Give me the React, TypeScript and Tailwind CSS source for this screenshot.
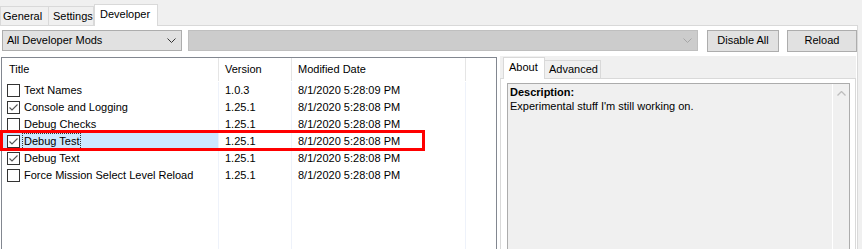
import React from 'react';

type Mod = {
  title: string;
  version: string;
  date: string;
  checked: boolean;
  selected?: boolean;
};

const mods: Mod[] = [
  { title: 'Text Names', version: '1.0.3', date: '8/1/2020 5:28:09 PM', checked: false },
  { title: 'Console and Logging', version: '1.25.1', date: '8/1/2020 5:28:08 PM', checked: true },
  { title: 'Debug Checks', version: '1.25.1', date: '8/1/2020 5:28:08 PM', checked: false },
  { title: 'Debug Test', version: '1.25.1', date: '8/1/2020 5:28:08 PM', checked: true, selected: true },
  { title: 'Debug Text', version: '1.25.1', date: '8/1/2020 5:28:08 PM', checked: true },
  { title: 'Force Mission Select Level Reload', version: '1.25.1', date: '8/1/2020 5:28:08 PM', checked: false },
];

function Chevron({ color }: { color: string }) {
  return (
    <svg width="9" height="5" viewBox="0 0 9 5" className="shrink-0">
      <polyline points="0.5,0.5 4.5,4.5 8.5,0.5" fill="none" stroke={color} strokeWidth="1" />
    </svg>
  );
}

function CheckBox({ checked }: { checked: boolean }) {
  return (
    <span className="w-[13px] h-[13px] border border-[#333333] bg-white flex items-center justify-center shrink-0">
      {checked && (
        <svg width="11" height="11" viewBox="0 0 11 11">
          <polyline points="1.5,5.5 4,8 9.5,2.5" fill="none" stroke="#555555" strokeWidth="1.1" />
        </svg>
      )}
    </span>
  );
}

export default function App() {
  return (
    <div className="w-[862px] h-[249px] bg-[#f0f0f0] flex flex-col overflow-hidden relative font-['Liberation_Sans',Arial,sans-serif] text-[11px] text-black leading-none">
      {/* Top tabs */}
      <div className="h-[25px] flex items-end shrink-0">
        <div className="h-[19px] w-[49px] border border-[#d9d9d9] border-b-0 bg-[#f0f0f0] flex items-center pl-[2px]">General</div>
        <div className="h-[19px] w-[45px] border border-[#d9d9d9] border-b-0 border-l-0 bg-[#f0f0f0] flex items-center pl-[4px]">Settings</div>
        <div className="h-[22px] w-[64px] border border-[#d9d9d9] border-b-0 bg-white flex items-center pl-[5px] pb-[3px] -mb-px z-10">Developer</div>
      </div>

      {/* Tab page */}
      <div className="flex-1 w-[858px] bg-white border-t border-r border-[#d9d9d9] flex flex-col">
        {/* Toolbar */}
        <div className="flex items-center h-[21px] mt-[4px] shrink-0">
          <div className="ml-[2px] w-[180px] h-[21px] bg-[#e1e1e1] border border-[#adadad] flex items-center justify-between pl-[4px] pr-[5px]">
            <span>All Developer Mods</span>
            <Chevron color="#333333" />
          </div>
          <div className="ml-[6px] w-[510px] h-[21px] bg-[#cccccc] border border-[#bfbfbf] flex items-center justify-end pr-[5px]">
            <Chevron color="#a6a6a6" />
          </div>
          <button className="ml-[9px] w-[72px] h-[22px] bg-[#e1e1e1] border border-[#adadad] flex items-center justify-center">
            Disable All
          </button>
          <button className="ml-[8px] w-[70px] h-[22px] bg-[#e1e1e1] border border-[#adadad] flex items-center justify-center">
            Reload
          </button>
        </div>

        {/* Main area */}
        <div className="flex-1 flex mt-[5px] min-h-0">
          {/* List view */}
          <div className="ml-px mt-px w-[496px] border border-[#828790] border-b-0 bg-white flex flex-col">
            <div className="h-[23px] flex shrink-0">
              <div className="w-[217px] border-r border-[#e5e5e5] pl-[7px] flex items-center">Title</div>
              <div className="w-[73px] border-r border-[#e5e5e5] pl-[6px] flex items-center">Version</div>
              <div className="w-[174px] border-r border-[#e5e5e5] pl-[6px] flex items-center">Modified Date</div>
              <div className="flex-1" />
            </div>
            <div className="flex-1 flex flex-col pt-px">
              {mods.map((m) => (
                <div key={m.title} className="h-[17px] flex shrink-0">
                  <div className={`w-[217px] border-r border-[#eef2fa] flex items-center pl-[5px] gap-[4px] ${m.selected ? 'bg-[#cce8ff]' : ''}`}>
                    <CheckBox checked={m.checked} />
                    <span className={m.selected ? 'outline outline-1 outline-dotted outline-[#333333] px-[1px] py-[2px] -ml-[1px]' : ''}>
                      {m.title}
                    </span>
                  </div>
                  <div className="w-[73px] border-r border-[#eef2fa] flex items-center pl-[6px]">{m.version}</div>
                  <div className="w-[174px] border-r border-[#eef2fa] flex items-center pl-[6px]">{m.date}</div>
                  <div className="flex-1" />
                </div>
              ))}
              <div className="flex-1 flex">
                <div className="w-[217px] border-r border-[#eef2fa]" />
                <div className="w-[73px] border-r border-[#eef2fa]" />
                <div className="w-[174px] border-r border-[#eef2fa]" />
                <div className="flex-1" />
              </div>
            </div>
          </div>

          {/* Right panel */}
          <div className="ml-[3px] w-[356px] flex flex-col bg-[#f0f0f0]">
            <div className="h-[22px] flex items-end shrink-0">
              <div className="ml-[3px] h-[22px] w-[42px] bg-white border border-[#d9d9d9] border-b-0 flex items-center pl-[5px] pb-[3px] -mb-px z-10">About</div>
              <div className="h-[18px] w-[56px] bg-[#f0f0f0] border border-[#d9d9d9] border-b-0 border-l-0 flex items-center pl-[4px]">Advanced</div>
            </div>
            <div className="flex-1 bg-white border border-[#d9d9d9] border-b-0 pt-[4px] pl-[6px] pr-[5px] flex flex-col">
              <div className="flex-1 bg-[#f0f0f0] border border-[#acacac] border-b-0 flex">
                <div className="flex-1 pl-[2px] pt-[3px] flex flex-col gap-[3px]">
                  <span className="font-bold">Description:</span>
                  <span>Experimental stuff I'm still working on.</span>
                </div>
                <div className="w-[17px] border-l border-white flex justify-center pt-[7px]">
                  <svg width="9" height="5" viewBox="0 0 9 5">
                    <polyline points="0.5,4.5 4.5,0.5 8.5,4.5" fill="none" stroke="#bdbdbd" strokeWidth="1.3" />
                  </svg>
                </div>
              </div>
            </div>
          </div>
        </div>
      </div>

      {/* Annotation highlight */}
      <div className="absolute left-0 top-[130px] w-[425px] h-[21px] border-[3px] border-[#ff0000]" />
    </div>
  );
}
